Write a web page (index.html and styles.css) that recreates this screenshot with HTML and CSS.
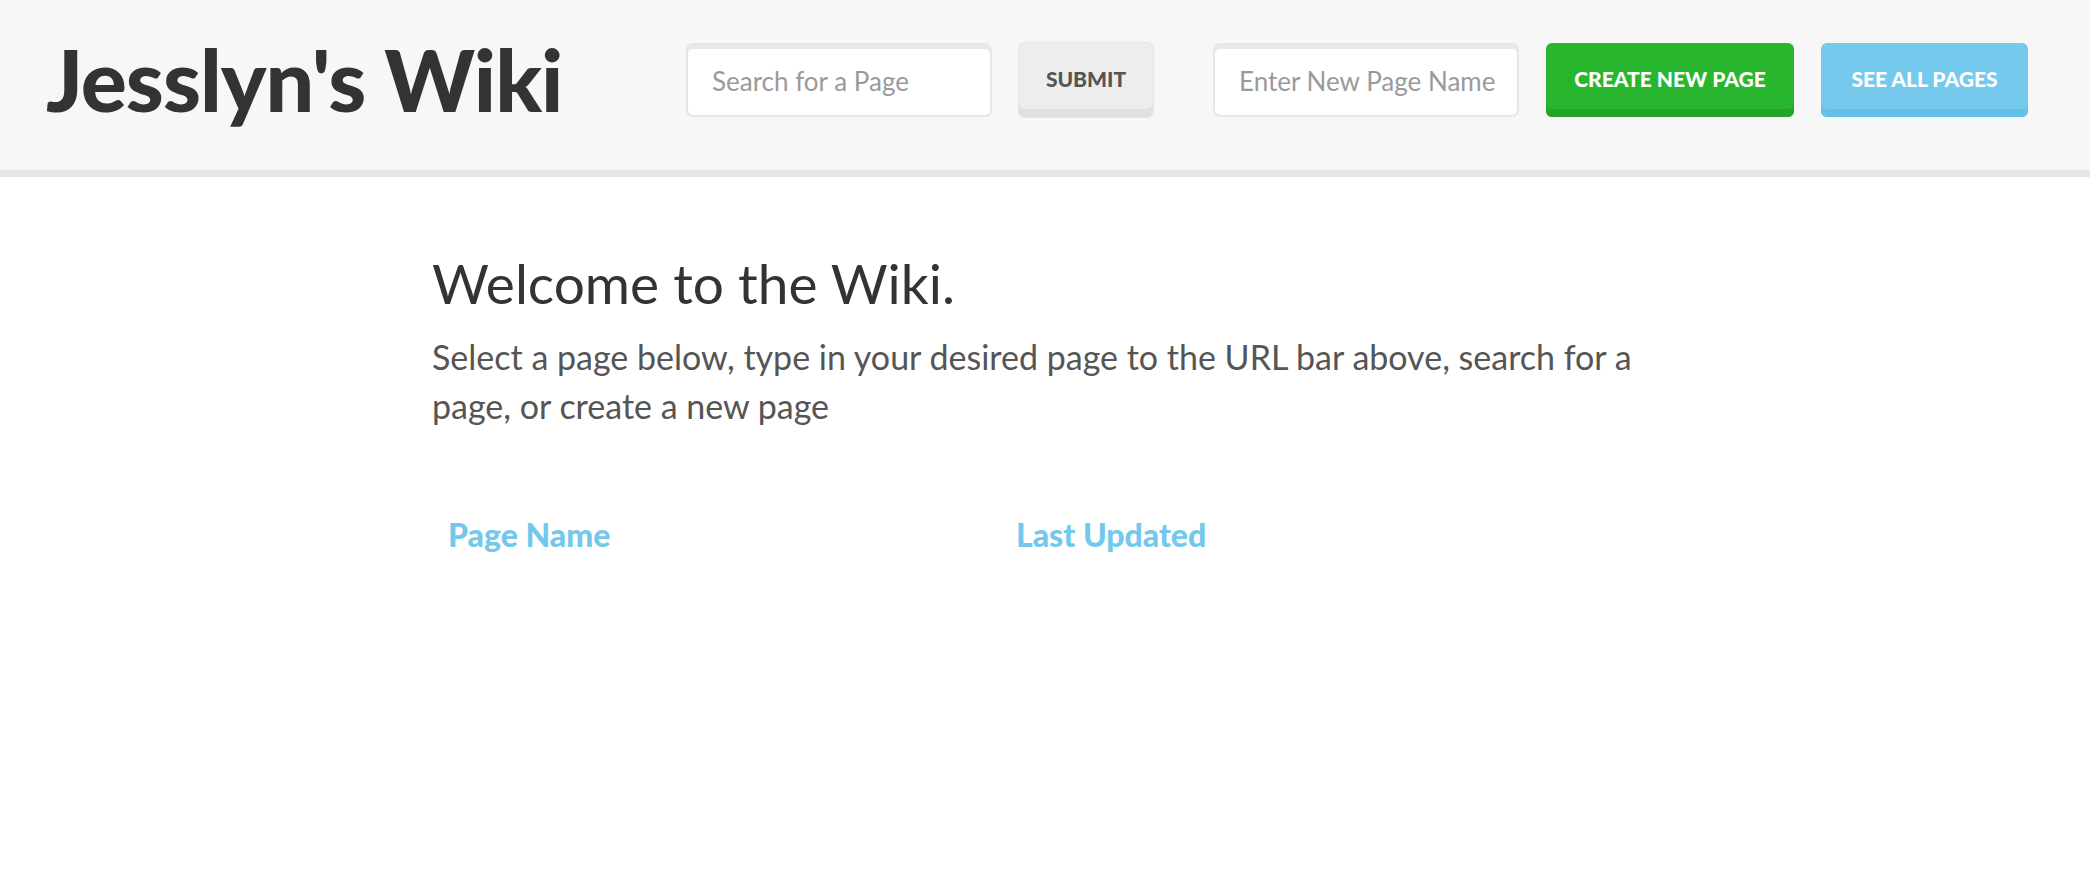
FILE: index.html
```html
<!DOCTYPE html>
<html lang="en">
<head>
<meta charset="utf-8">
<title>Jesslyn's Wiki</title>
<link rel="stylesheet" href="styles.css">
</head>
<body>
<header class="topbar">
  <h1 class="brand">Jesslyn's Wiki</h1>
  <nav class="actions">
    <form class="action-form">
      <input class="field" type="text" placeholder="Search for a Page">
      <button class="btn btn-grey" type="button">SUBMIT</button>
    </form>
    <form class="action-form">
      <input class="field" type="text" placeholder="Enter New Page Name">
      <button class="btn btn-green" type="button">CREATE NEW PAGE</button>
      <button class="btn btn-blue" type="button">SEE ALL PAGES</button>
    </form>
  </nav>
</header>
<main class="content">
  <h2 class="welcome">Welcome to the Wiki.</h2>
  <p class="intro">Select a page below, type in your desired page to the URL bar above, search for a page, or create a new page</p>
  <div class="page-table">
    <div class="th th-name">Page Name</div>
    <div class="th th-date">Last Updated</div>
  </div>
</main>
</body>
</html>
```

FILE: styles.css
```css
html, body {
  margin: 0;
  padding: 0;
  background: #ffffff;
}
body {
  font-family: "Lato", "Open Sans", "Liberation Sans", sans-serif;
  color: #333333;
}
.topbar {
  display: flex;
  align-items: center;
  justify-content: space-between;
  height: 177px;
  box-sizing: border-box;
  padding: 0 62px 10px 46px;
  background: #f7f7f7;
  border-bottom: 7px solid #e6e6e6;
}
.brand {
  margin: 0 0 2px 0;
  font-size: 86px;
  font-weight: 900;
  letter-spacing: -1px;
  color: #333333;
  line-height: 1;
}
.actions {
  display: flex;
  gap: 60px;
  align-items: center;
}
.action-form {
  display: flex;
  gap: 27px;
  align-items: center;
  margin: 0;
}
.field {
  width: 306px;
  height: 74px;
  box-sizing: border-box;
  padding: 2px 22px 0 24px;
  border: 2px solid #e6e6e6;
  border-radius: 7px;
  box-shadow: inset 0 4px 0 #e8e8e8;
  background: #ffffff;
  font-family: inherit;
  font-size: 26px;
  color: #555555;
  outline: none;
}
.field::placeholder {
  color: #9a9a9a;
}
.btn {
  height: 74px;
  box-sizing: border-box;
  padding: 0 0 4px 0;
  border: none;
  border-radius: 6px;
  font-family: inherit;
  font-size: 21px;
  font-weight: 900;
  cursor: pointer;
}
.btn-grey {
  width: 134px;
  background: #ededed;
  color: #555555;
  box-shadow: inset 0 -8px 0 #e0e0e0, 0 0 0 1px #e4e4e4;
}
.btn-green {
  width: 248px;
  background: #29b62f;
  color: #ffffff;
  box-shadow: inset 0 -8px 0 #25a32a;
}
.btn-blue {
  width: 207px;
  background: #75c9ed;
  color: #ffffff;
  box-shadow: inset 0 -8px 0 #63c0e7;
}
.content {
  width: 1226px;
  margin: 0 auto;
  padding-top: 73px;
}
.welcome {
  margin: 0;
  font-size: 55px;
  font-weight: 400;
  line-height: 1.2;
  color: #333333;
}
.intro {
  margin: 16px 0 0 0;
  font-size: 34px;
  line-height: 49px;
  color: #555555;
}
.page-table {
  display: grid;
  grid-template-columns: 568px 1fr;
  margin-top: 84px;
}
.th {
  padding: 0 16px;
  font-size: 32px;
  font-weight: 900;
  color: #73c8ec;
  line-height: 1.3;
}
```
